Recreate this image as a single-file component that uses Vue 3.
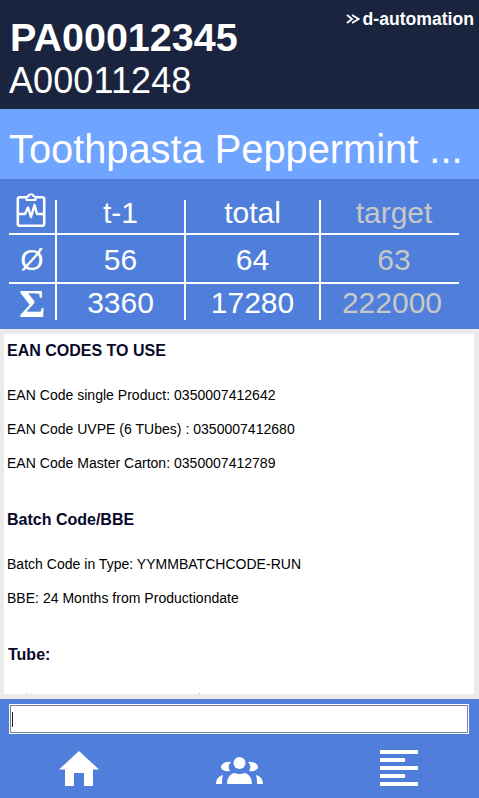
<script setup>
const rows = [
  { sym: 'Ø', cls: 'sym', vals: ['56', '64', '63'] },
  { sym: 'Σ', cls: 'sigma', vals: ['3360', '17280', '222000'] },
]
const eanLines = [
  'EAN Code single Product: 0350007412642',
  'EAN Code UVPE (6 TUbes) : 0350007412680',
  'EAN Code Master Carton: 0350007412789',
]
const batchLines = ['Batch Code in Type: YYMMBATCHCODE-RUN', 'BBE: 24 Months from Productiondate']
</script>

<template>
  <div class="app">
    <header class="head">
      <div class="ids">
        <div class="pa">PA00012345</div>
        <div class="a">A00011248</div>
      </div>
      <div class="logo">
        <svg class="chev" width="14" height="10" viewBox="0 0 14 10" fill="none" stroke="#fff" stroke-width="1.8">
          <path d="M1 1l5 4-5 4M6 1l6.500 4L6 9" />
        </svg>
        <span>d-automation</span>
      </div>
    </header>
    <div class="title">Toothpasta Peppermint ...</div>
    <section class="stats">
      <div class="grid">
        <div class="cell first top">
          <svg width="32" height="36" viewBox="0 0 32 36" fill="none" stroke="#fff" stroke-width="2.6" stroke-linejoin="round">
            <rect x="2.800" y="4.300" width="26.400" height="28.400" rx="2" />
            <path d="M11.500 4.500c0-1 1-1.300 2-1.300 .3-2.600 4.700-2.600 5 0 1 0 2 .3 2 1.300v2.500h-9z" fill="#4f7fdb" stroke-width="2" />
            <path d="M3 21h7l3-6.500 3 9.500 3.500-12 2.500 9h7" stroke-width="2.400" />
          </svg>
        </div>
        <div class="cell top">t-1</div>
        <div class="cell top">total</div>
        <div class="cell muted last top">target</div>
        <template v-for="(r, i) in rows" :key="i">
          <div class="cell first" :class="[r.cls, i === 0 ? 'mid' : 'end']">{{ r.sym }}</div>
          <div class="cell" :class="i === 0 ? 'mid' : 'end'">{{ r.vals[0] }}</div>
          <div class="cell" :class="i === 0 ? 'mid' : 'end'">{{ r.vals[1] }}</div>
          <div class="cell muted last" :class="i === 0 ? 'mid' : 'end'">{{ r.vals[2] }}</div>
        </template>
      </div>
    </section>
    <main class="frame">
      <div class="doc">
        <h3 class="h1">EAN CODES TO USE</h3>
        <p v-for="l in eanLines" :key="l">{{ l }}</p>
        <h3 class="h2">Batch Code/BBE</h3>
        <p v-for="l in batchLines" :key="l">{{ l }}</p>
        <h3 class="h3">Tube:</h3>
        <div class="ticks"><i></i><i></i></div>
      </div>
    </main>
    <div class="inputbar">
      <div class="input"><span class="caret"></span></div>
    </div>
    <nav class="nav">
      <svg class="home" width="42" height="36" viewBox="0 0 42 36" fill="#fff">
        <path d="M21 0L41 18.500H35V35H26V22H16V35H7V18.500H1z" />
      </svg>
      <svg class="users" width="49" height="28" viewBox="0 0 49 28" fill="#fff">
        <circle cx="24.500" cy="6" r="6" />
        <path d="M12 27c0-7 4-11 8-11 1.500.8 3 1 4.500 1s3-.2 4.500-1c4 0 8 4 8 11z" />
        <path d="M16 5c-5-1-10 2-10 5 0 3 5 5 9 4-2-3-2-6 1-9zM33 5c5-1 10 2 10 5 0 3-5 5-9 4 2-3 2-6-1-9z" />
        <path d="M1 27c0-5 3-8 7-9-1 3-1 6-1 9zM48 27c0-5-3-8-7-9 1 3 1 6 1 9z" />
      </svg>
      <div class="menu">
        <i></i><i class="s"></i><i></i><i class="s"></i><i></i>
      </div>
    </nav>
  </div>
</template>

<style scoped>
.app {
  width: 479px;
  height: 798px;
  overflow: hidden;
  display: flex;
  flex-direction: column;
  font-family: "Liberation Sans", Arial, sans-serif;
  background: #4f7fdb;
}
.head {
  height: 109px;
  flex: none;
  background: #1a243f;
  color: #fff;
  display: flex;
  justify-content: space-between;
}
.ids { padding: 15px 0 0 9px; }
.pa { font-size: 39.5px; font-weight: 700; line-height: 45px; padding-left: 1px; }
.a { font-size: 36px; line-height: 41px; letter-spacing: 0.1px; }
.logo {
  display: flex;
  align-items: center;
  gap: 3px;
  height: 20px;
  margin: 9px 5px 0 0;
  font-size: 17.6px;
  font-weight: 700;
}
.title {
  height: 70px;
  flex: none;
  background: #6fa4ff;
  color: #fff;
  font-size: 39.8px;
  line-height: 80px;
  padding-left: 9px;
  white-space: nowrap;
}
.stats { height: 150px; flex: none; padding: 21px 0 0 9px; box-sizing: border-box; }
.grid {
  display: grid;
  grid-template-columns: 46px 129px 135px 140px;
  grid-template-rows: 35px 49px 36px;
  width: 450px;
  color: #fff;
  font-size: 30px;
}
.cell {
  display: flex;
  align-items: center;
  justify-content: center;
  border-left: 2px solid #fff;
  border-bottom: 2px solid #fff;
  white-space: nowrap;
  box-sizing: border-box;
}
.top { padding-bottom: 8px; }
.mid, .end { padding-top: 2px; }
.first { border-left: 0; }
.end { border-bottom: 0; }
.last { padding-left: 8px; }
.last.end { padding-left: 4px; }
.first svg { margin-top: -3px; margin-left: -2px; flex: none; }
.muted { color: #c8c8c8; }
.sigma { font-family: "Liberation Serif", serif; font-weight: 700; font-size: 40px; }
.frame {
  height: 370px;
  flex: none;
  background: #ebebeb;
  padding: 5px 5px 5px 4px;
  box-sizing: border-box;
}
.doc {
  height: 360px;
  background: #fff;
  overflow: hidden;
  color: #000;
  padding-left: 3px;
  position: relative;
}
.doc p { margin: 0; font-size: 14px; line-height: 16px; margin-bottom: 18px; letter-spacing: 0.02px; }
.doc h3 { margin: 0; font-size: 16px; line-height: 18px; font-weight: 700; color: #08082a; }
.h1 { padding-top: 8px; margin-bottom: 27px !important; }
.h2 { padding-top: 22px; margin-bottom: 27px !important; }
.h3 { padding-top: 22px; padding-left: 1px; }
.ticks { position: absolute; left: 0; right: 0; bottom: 0; height: 1px; }
.ticks i { position: absolute; width: 1px; height: 1px; background: #bbb; }
.ticks i:first-child { left: 22px; }
.ticks i:last-child { left: 195px; }
.inputbar { height: 41px; flex: none; padding: 5px 0 0 9px; box-sizing: border-box; }
.input {
  width: 460px;
  height: 30px;
  box-sizing: border-box;
  background: #fff;
  border: 1px solid #fff;
  box-shadow: inset 1px 1px 0 #767f95, inset -1px -1px 0 #6f86ad;
  padding: 7px 0 0 2px;
}
.caret { display: block; width: 1px; height: 15px; background: #222; }
.nav { position: relative; flex: 1; }
.home, .users, .menu { position: absolute; }
.home { left: 58px; top: 11px; }
.users { left: 215px; top: 17px; }
.menu {
  left: 380px;
  top: 10px;
  width: 38px;
  display: flex;
  flex-direction: column;
  gap: 4px;
}
.menu i { display: block; height: 4px; background: #fff; }
.menu i.s { width: 25px; }
</style>
